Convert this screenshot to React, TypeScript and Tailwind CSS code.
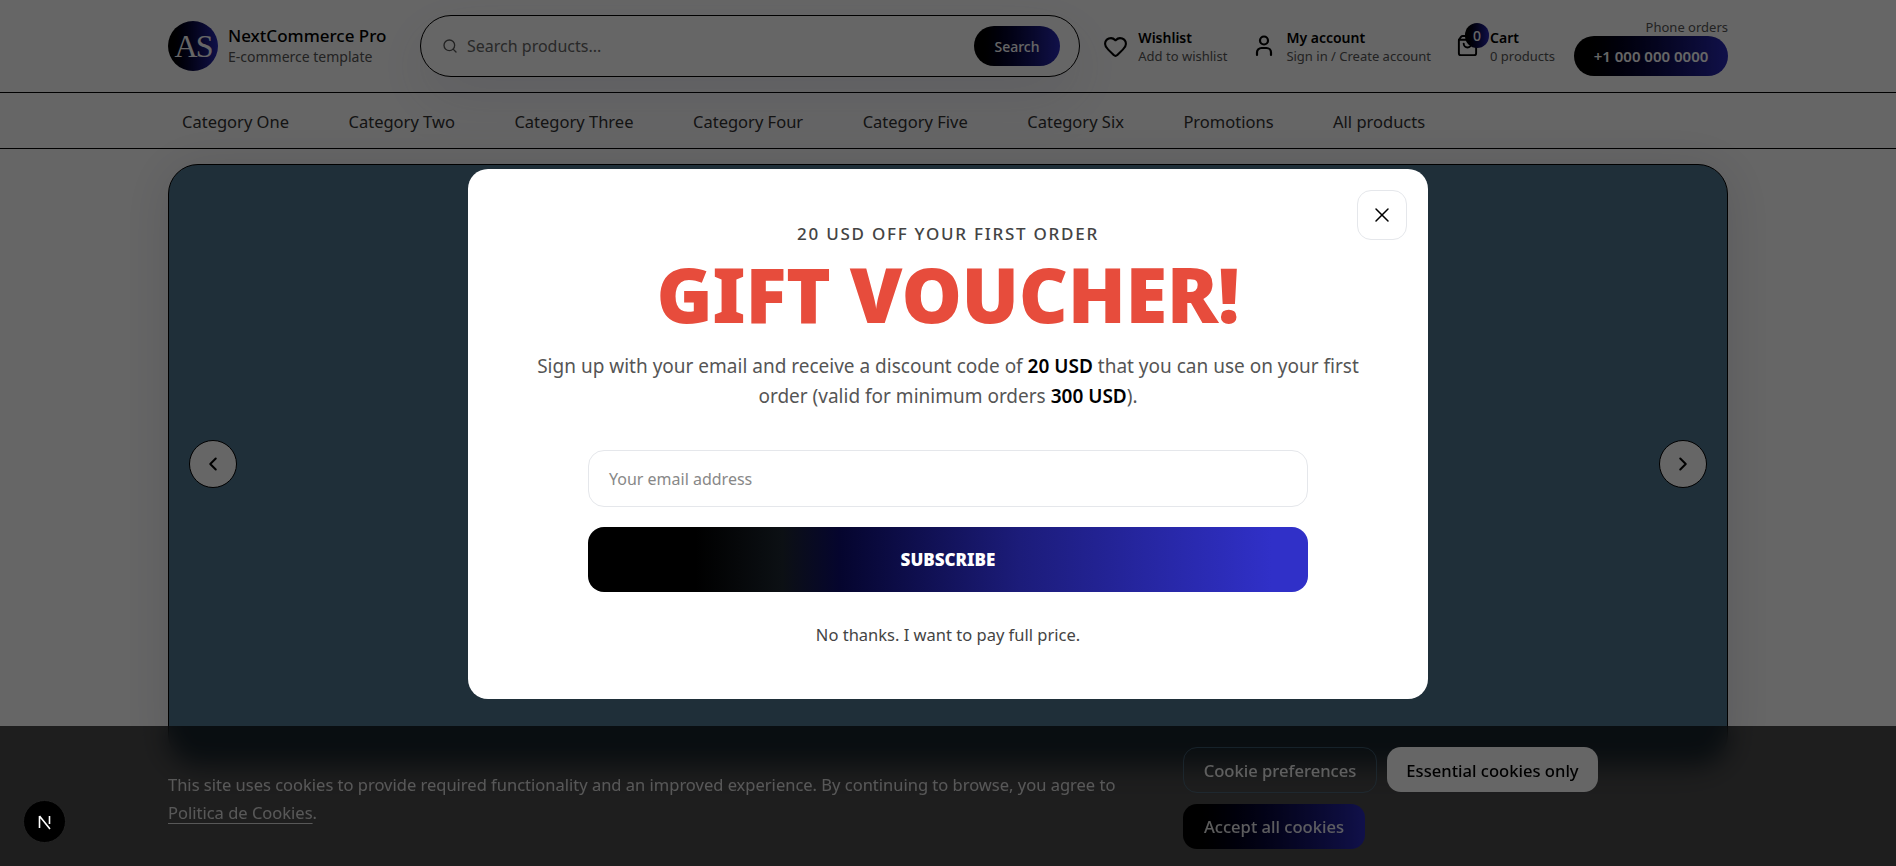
import { Search, X, ChevronLeft, ChevronRight, Heart, ShoppingBag } from "lucide-react";

const categories = ["Category One", "Category Two", "Category Three", "Category Four", "Category Five", "Category Six", "Promotions", "All products"];

function UserIcon() {
  return (
    <svg width="18" height="22" viewBox="0 0 18 22" fill="none" stroke="#000" strokeWidth="2.2" strokeLinecap="round">
      <circle cx="9" cy="5.5" r="4" />
      <path d="M2 20v-2.5A4.5 4.5 0 0 1 6.5 13h5a4.5 4.5 0 0 1 4.5 4.5V20" />
    </svg>
  );
}

function HeaderLink({ icon, title, sub, gap = "gap-[11px]" }: { icon: React.ReactNode; title: string; sub: string; gap?: string }) {
  return (
    <div className={`flex items-center ${gap}`}>
      {icon}
      <div className="flex flex-col">
        <span className="text-[14px] leading-[19px] font-semibold text-black">{title}</span>
        <span className="text-[13px] leading-[18px] text-[#555]">{sub}</span>
      </div>
    </div>
  );
}

export default function App() {
  return (
    <div className="relative h-[866px] overflow-hidden bg-white font-['Noto_Sans','Open_Sans',sans-serif]">
      <header className="relative z-10 h-[93px] border-b border-black pl-[168px] pr-[168px] flex items-center">
        <div className="flex items-center gap-[10px] w-[252px] shrink-0">
          <div className="w-[50px] h-[50px] rounded-full bg-gradient-to-r from-black to-[#2a2ab8] flex items-center justify-center text-white font-['Liberation_Serif',serif] text-[32px] tracking-[-2px]">
            AS
          </div>
          <div className="flex flex-col">
            <span className="text-[17px] leading-[22px] font-medium text-black">NextCommerce Pro</span>
            <span className="text-[14px] leading-[20px] text-[#555]">E-commerce template</span>
          </div>
        </div>
        <div className="w-[660px] h-[62px] shrink-0 rounded-full border border-black flex items-center pl-[21px] pr-[19px] shadow-[0_20px_60px_rgba(60,60,140,0.10)] bg-white">
          <Search size={16} strokeWidth={2} color="#555" />
          <span className="ml-[9px] text-[16px] text-[#666] flex-1">Search products...</span>
          <div className="w-[86px] h-[40px] rounded-full bg-gradient-to-r from-black to-[#2a2ab8] flex items-center justify-center text-white text-[14px] font-medium">Search</div>
        </div>
        <div className="flex-1 flex items-center justify-end">
          <div className="mr-[28px]">
            <HeaderLink icon={<Heart size={25} strokeWidth={2} color="#000" />} title="Wishlist" sub="Add to wishlist" gap="gap-[10px]" />
          </div>
          <div className="mr-[26px]">
            <HeaderLink icon={<UserIcon />} title="My account" sub="Sign in / Create account" gap="gap-[13px]" />
          </div>
          <div className="flex items-center gap-[12px] mr-[19px]">
            <div className="relative w-[21px] h-[24px]">
              <ShoppingBag size={23} strokeWidth={2} color="#000" className="-ml-[1px]" />
              <div className="absolute -top-[11px] left-[8px] w-[24px] h-[25px] rounded-full bg-gradient-to-r from-black to-[#2a2ab8] text-white text-[14px] font-medium flex items-center justify-center">0</div>
            </div>
            <div className="flex flex-col">
              <span className="text-[14px] leading-[19px] font-semibold text-black">Cart</span>
              <span className="text-[13px] leading-[18px] text-[#555]">0 products</span>
            </div>
          </div>
          <div className="flex flex-col items-end mt-[3px]">
            <span className="text-[13px] leading-[18px] text-[#555] mb-0 -translate-y-[1px]">Phone orders</span>
            <div className="w-[154px] h-[40px] -mt-[1px] rounded-full bg-gradient-to-r from-black to-[#2a2ab8] flex items-center justify-center text-white text-[15px] font-semibold">+1 000 000 0000</div>
          </div>
        </div>
      </header>

      <nav className="h-[56px] border-b border-black pl-[182px] pt-[3px] flex items-center gap-[59.5px] text-[16.5px] text-[#333]">
        {categories.map((c) => (
          <span key={c}>{c}</span>
        ))}
      </nav>

      <main className="mt-[15px] mx-[168px] h-[600px] relative rounded-[30px] border border-black bg-[#4f7690] shadow-[0_4px_50px_rgba(30,30,70,0.14)] flex items-center justify-between px-[20px]">
        <div className="w-[48px] h-[48px] rounded-full bg-white border border-black flex items-center justify-center">
          <ChevronLeft size={22} strokeWidth={2.2} color="#000" />
        </div>
        <div className="w-[48px] h-[48px] rounded-full bg-white border border-black flex items-center justify-center">
          <ChevronRight size={22} strokeWidth={2.2} color="#000" />
        </div>
      </main>

      <div className="absolute bottom-0 inset-x-0 h-[140px] z-20 bg-black/70 backdrop-blur-md pl-[168px] pt-[46px] flex">
        <p className="w-[1016px] text-[16.5px] leading-[28px] text-white/80 -mt-[1px]">
          <span className="block w-[1000px]">This site uses cookies to provide required functionality and an improved experience. By continuing to browse, you agree to</span>
          <span className="underline underline-offset-4">Politica de Cookies</span>.
        </p>
        <div className="absolute left-[1183px] top-[21px] w-[430px] flex flex-wrap gap-x-[10px] gap-y-[11px]">
          <div className="h-[46px] w-[194px] rounded-[14px] border border-[#4e7691]/60 flex items-center justify-center text-white/90 text-[16.6px] font-medium pt-[3px]">Cookie preferences</div>
          <div className="h-[45px] w-[211px] rounded-[14px] bg-white flex items-center justify-center text-black text-[16.6px] font-medium pt-[3px]">Essential cookies only</div>
          <div className="h-[45px] w-[182px] rounded-[14px] bg-gradient-to-r from-black to-[#2a2ab8] flex items-center justify-center text-white/90 text-[16.6px] font-medium pt-[2px]">Accept all cookies</div>
        </div>
      </div>

      <div className="absolute inset-0 z-30 bg-black/60 flex items-center justify-center">
        <div className="relative w-[960px] h-[530px] mt-[2px] rounded-[20px] bg-white flex flex-col items-center pt-[81px]">
          <div className="absolute top-[21px] right-[21px] w-[50px] h-[50px] rounded-[14px] border border-[#e5e7eb] flex items-center justify-center">
            <X size={24} strokeWidth={1.5} color="#000" />
          </div>
          <div className="-mt-[28px] text-[17px] leading-[24px] font-medium tracking-[1.75px] text-[#444]">20 USD OFF YOUR FIRST ORDER</div>
          <h1 className="mt-[3px] text-[76px] leading-[90px] font-black tracking-[-0.4px] text-[#e74c3c]">GIFT VOUCHER!</h1>
          <p className="mt-[12px] w-[840px] text-center text-[19px] leading-[30px] text-[#555]">
            Sign up with your email and receive a discount code of <b className="font-semibold text-black">20 USD</b> that you can use on your first order (valid for minimum orders <b className="font-semibold text-black">300 USD</b>).
          </p>
          <div className="mt-[39px] w-[720px] h-[57px] rounded-[16px] border border-[#e5e7eb] flex items-center pl-[20px] text-[16px] text-[#888]">Your email address</div>
          <div className="mt-[20px] w-[720px] h-[65px] rounded-[16px] bg-[linear-gradient(90deg,#000_15%,#0c1014_27%,#05052e_35%,#1c1c7a_60%,#3030c8_95%)] flex items-center justify-center text-white text-[17px] font-black pt-[1px]">SUBSCRIBE</div>
          <div className="mt-[31px] text-[16.5px] leading-[24px] text-[#444]">No thanks. I want to pay full price.</div>
        </div>
      </div>

      <div className="absolute left-[23px] top-[800px] z-40 w-[43px] h-[43px] rounded-full bg-black border border-[#222] flex items-center justify-center">
        <svg width="18" height="18" viewBox="0 0 18 18" fill="none">
          <path d="M3.5 3v12M3.5 3 14 16" stroke="#fff" strokeWidth="1.6" />
          <path d="M13.5 3v8" stroke="#fff" strokeWidth="1.6" />
        </svg>
      </div>
    </div>
  );
}
